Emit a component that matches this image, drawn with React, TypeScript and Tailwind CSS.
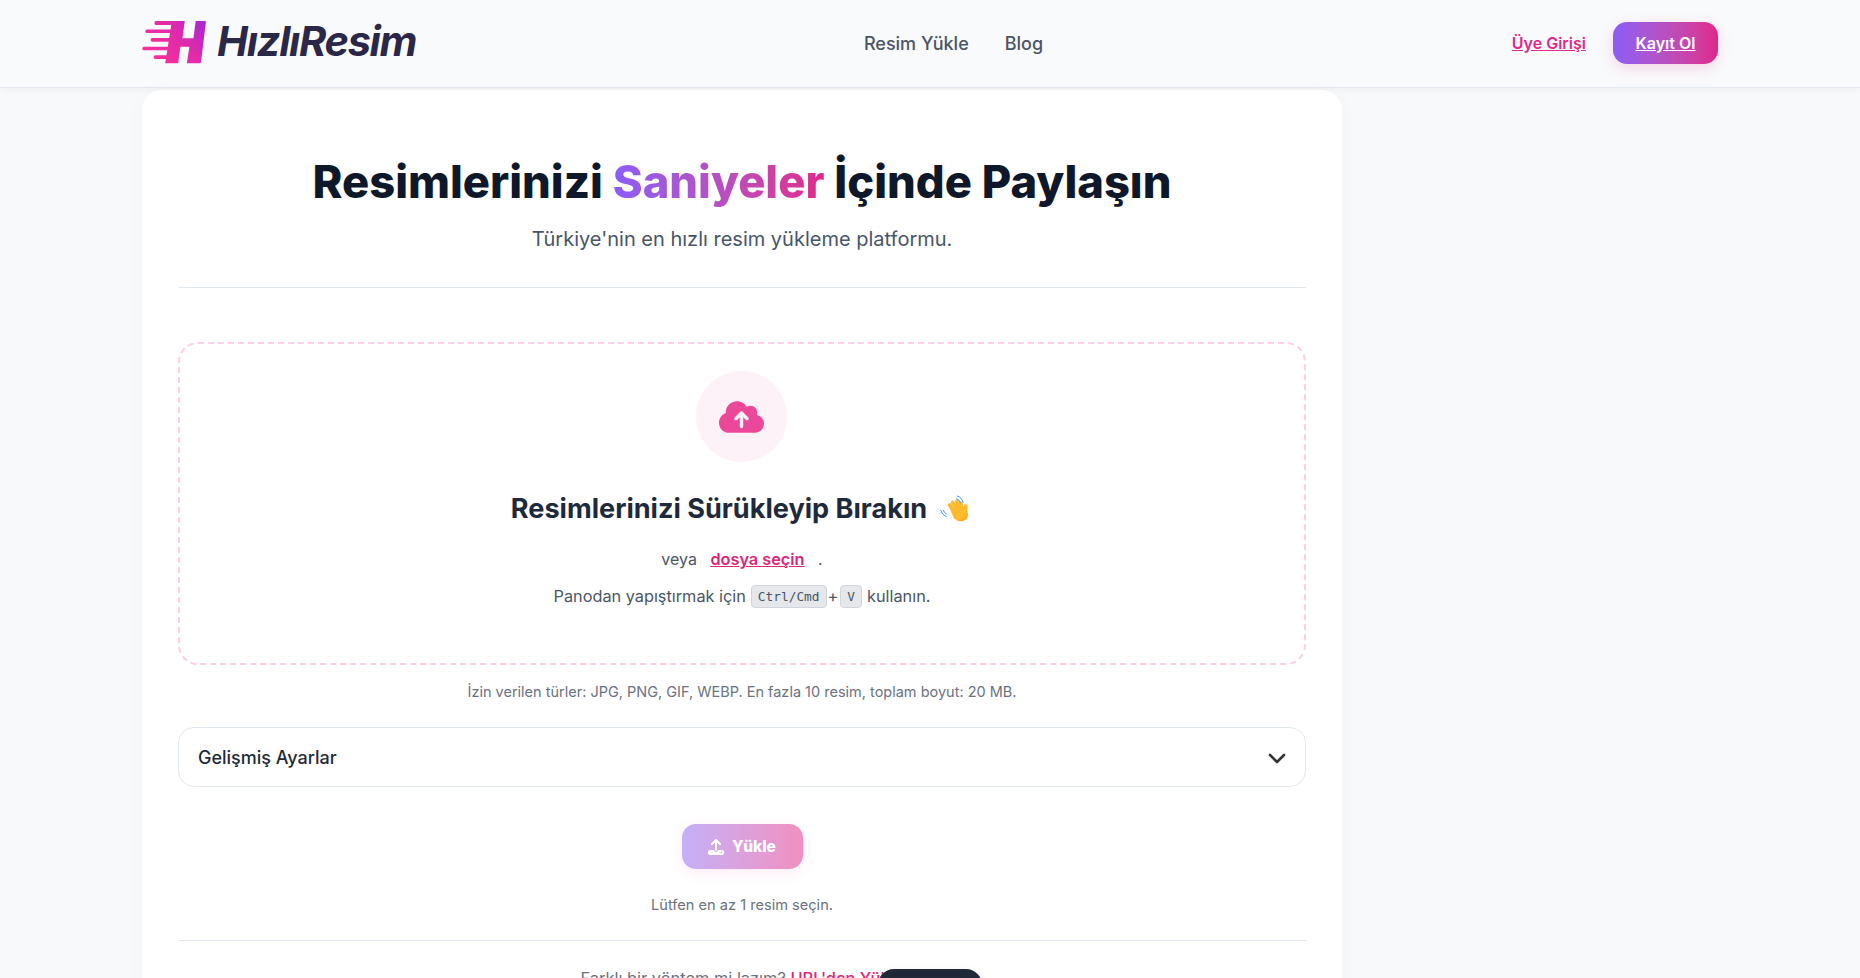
import { FaCloudArrowUp, FaUpload } from "react-icons/fa6";

export default function App() {
  return (
    <div className="relative h-[978px] overflow-hidden bg-[#f8f9fb] font-['Inter',sans-serif] text-[#1f2937]">
      <header className="h-[88px] border-b border-[#e2e8f0] bg-[#f9fafc] shadow-[0_2px_6px_rgba(0,0,0,0.04)]">
        <div className="mx-[142px] flex h-[87px] items-center justify-between">
          <div className="flex w-[467px] items-center">
            <svg viewBox="12 15 196 132" className="mb-[4px] h-[44px] w-[65px]" aria-hidden="true">
              <defs>
                <linearGradient id="logoGrad" gradientUnits="userSpaceOnUse" x1="40" y1="150" x2="205" y2="18">
                  <stop offset="0" stopColor="#ff2f9c" />
                  <stop offset="0.6" stopColor="#dd2bab" />
                  <stop offset="1" stopColor="#a526d8" />
                </linearGradient>
              </defs>
              <g fill="url(#logoGrad)">
                <rect x="50" y="18" width="62" height="12" rx="4" />
                <rect x="22" y="43" width="84" height="11" rx="5" />
                <rect x="38" y="69" width="66" height="11" rx="5" />
                <rect x="13" y="95" width="84" height="11" rx="5" />
                <rect x="47" y="121" width="50" height="11" rx="5" />
                <path d="M102 18 H141 L134 70 H167 L174 18 H202 Q205 18 204.500 22 L190 141 Q189.500 145 186 145 H147 L155 95 H128 L121 145 H82 Z" />
              </g>
            </svg>
            <span className="mb-[4px] ml-[10px] text-[41.5px] leading-none font-bold tracking-[-1.3px] text-[#2a2748] italic">HızlıResim</span>
          </div>
          <nav className="flex items-center gap-9 text-[18px] font-medium text-[#4b5563]">
            <a>Resim Yükle</a>
            <a>Blog</a>
          </nav>
          <div className="mb-[2px] flex w-[420px] items-center justify-end gap-[27px]">
            <a className="text-[16px] font-semibold text-[#e02a8c] underline">Üye Girişi</a>
            <a className="flex h-[42px] w-[105px] items-center justify-center rounded-[14px] bg-gradient-to-r from-[#8b5cf6] to-[#e0258a] text-[16px] font-semibold text-white underline shadow-[0_4px_14px_rgba(219,39,119,0.18)]">Kayıt Ol</a>
          </div>
        </div>
      </header>

      <main className="mx-[142px] mt-[2px] w-[1200px] rounded-t-[20px] bg-white px-9 pt-[64px] shadow-[0_4px_20px_rgba(0,0,0,0.03)]">
        <h1 className="text-center text-[45.300px] leading-[56px] font-extrabold text-[#0f172a]">
          Resimlerinizi <span className="bg-gradient-to-r from-[#8b5cf6] to-[#e0258a] bg-clip-text text-transparent">Saniyeler</span> İçinde Paylaşın
        </h1>
        <p className="mt-[13px] text-center text-[20px] leading-[32px] text-[#475569]">Türkiye'nin en hızlı resim yükleme platformu.</p>
        <div className="mt-[32px] border-t border-[#e2e8f0]" />

        <section className="mt-[54px] flex h-[323px] flex-col items-center rounded-[20px] border-2 border-dashed border-[#fbcfe8] pt-[27px]">
          <div className="mr-[1px] flex h-[91px] w-[91px] items-center justify-center rounded-full bg-[#fdf2f8]">
            <FaCloudArrowUp className="h-[36px] w-[45px] text-[#ec4899]" />
          </div>
          <h2 className="mt-[29px] mr-[3px] flex items-center text-[27.100px] leading-[36px] font-bold text-[#1e293b]">
            Resimlerinizi Sürükleyip Bırakın
            <svg viewBox="30 14 90 84" className="ml-[13px] h-[28px] w-[30px]" aria-hidden="true">
              <g fill="none" strokeLinecap="round">
                <g stroke="#fdba2c" strokeWidth="11">
                  <path d="M70 62 L59 44" />
                  <path d="M78 54 L68 36" />
                  <path d="M86 52 L80 33" />
                  <path d="M95 54 L92 38" />
                  <path d="M106 66 L107 47" />
                </g>
                <g stroke="#3b9be8" strokeWidth="3">
                  <path d="M82 17 Q95 20 99 36" />
                  <path d="M80 25 Q88 27 91 36" />
                  <path d="M32 60 Q35 73 49 79" />
                  <path d="M40 60 Q42 67 49 71" />
                </g>
              </g>
              <path fill="#fdba2c" d="M62 62 Q68 50 85 48 Q108 46 113 66 Q116 88 98 92 Q82 95 72 84 Z" />
              <path fill="#f59e0b" opacity="0.55" d="M113 68 Q116 88 98 92 Q88 94 80 90 Q102 88 113 68 Z" />
            </svg>
          </h2>
          <p className="mt-[20px] flex items-center text-[16px] leading-[24px] text-[#4b5563]">
            <span>veya</span>
            <a className="mx-[13.500px] text-[16.300px] font-semibold text-[#db2777] underline">dosya seçin</a>
            <span>.</span>
          </p>
          <p className="mt-[13px] flex items-center text-[16.300px] leading-[24px] text-[#4b5563]">
            Panodan yapıştırmak için
            <kbd className="mr-[1px] ml-[5px] rounded-[4px] border border-[#d1d5db] bg-[#e5e7eb] px-[6px] font-['DejaVu_Sans_Mono',monospace] text-[12.800px] leading-[21px] text-[#4b5563]">Ctrl/Cmd</kbd>
            +
            <kbd className="mr-[5px] ml-[2px] rounded-[4px] border border-[#d1d5db] bg-[#e5e7eb] px-[6px] font-['DejaVu_Sans_Mono',monospace] text-[12.800px] leading-[21px] text-[#4b5563]">V</kbd>
            kullanın.
          </p>
        </section>

        <p className="mt-[17px] text-center text-[14.500px] leading-[20px] text-[#6b7280]">İzin verilen türler: JPG, PNG, GIF, WEBP. En fazla 10 resim, toplam boyut: 20 MB.</p>

        <div className="mt-[25px] flex h-[60px] items-center justify-between rounded-[16px] border border-[#e2e8f0] bg-white pr-[19px] pl-[19px]">
          <span className="text-[18px] font-medium text-[#1f2937]">Gelişmiş Ayarlar</span>
          <svg viewBox="0 0 18 12" className="mt-[3px] h-[12px] w-[18px]" aria-hidden="true">
            <path fill="none" stroke="#333" strokeWidth="2.600" strokeLinecap="round" strokeLinejoin="round" d="M2 2 L9 9 L16 2" />
          </svg>
        </div>

        <div className="mt-[37px] flex justify-center">
          <button className="flex h-[45px] w-[121px] items-center justify-center gap-[8px] rounded-[14px] bg-gradient-to-r from-[#c4b0f8] to-[#f08fc0] text-[15.500px] font-extrabold text-white shadow-[0_4px_14px_rgba(236,72,153,0.1)]">
            <FaUpload className="h-[16px] w-[16px]" />
            Yükle
          </button>
        </div>

        <p className="mt-[26px] text-center text-[14.600px] leading-[20px] text-[#6b7280]">Lütfen en az 1 resim seçin.</p>
        <div className="mt-[25px] border-t border-[#e2e8f0]" />
        <p className="mt-[25px] text-center text-[16.400px] leading-[24px] text-[#6b7280]">
          Farklı bir yöntem mi lazım? <a className="font-medium text-[#db2777]">URL'den Yükle</a>
        </p>
      </main>

      <div className="absolute top-[969px] left-[878px] h-[60px] w-[104px] rounded-[16px] bg-[#1f2937] shadow-[0_4px_12px_rgba(0,0,0,0.08)]" />
    </div>
  );
}
